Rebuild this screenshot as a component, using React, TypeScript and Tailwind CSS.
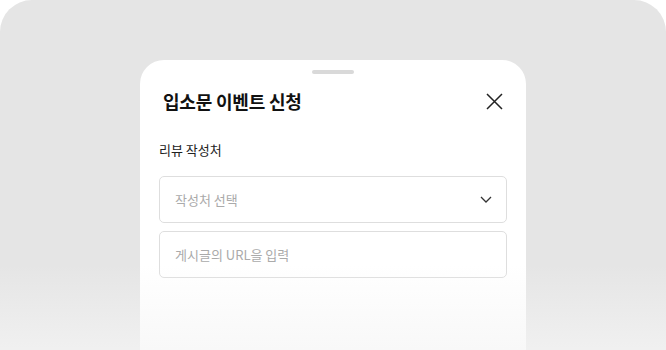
export default function App() {
  return (
    <div
      className="relative flex h-[350px] w-[666px] flex-col items-center overflow-hidden rounded-t-[32px] bg-[#e5e5e5] pt-[60px]"
      style={{ fontFamily: '"Noto Sans CJK KR", "Noto Sans", sans-serif' }}
    >
      <div className="flex w-[386px] flex-1 flex-col rounded-t-[24px] bg-white px-[19px]">
        <div className="flex justify-center pt-[10px]">
          <div className="h-1 w-[42px] rounded-full bg-[#d9d9d9]" />
        </div>
        <div className="mt-[14px] flex items-center justify-between pl-1">
          <h1 className="text-[18px] font-bold leading-[26px] tracking-[-0.2px] text-[#111]">입소문 이벤트 신청</h1>
          <button className="flex h-[26px] w-[26px] items-center justify-center">
            <svg width="17" height="17" viewBox="0 0 17 17" fill="none" stroke="#222" strokeWidth="1.5">
              <path d="M1 1l15 15M16 1L1 16" />
            </svg>
          </button>
        </div>
        <div className="mt-[26px] text-[13px] leading-[20px] text-[#222]">리뷰 작성처</div>
        <div className="mt-[16px] flex h-[47px] items-center justify-between rounded-[5px] border border-[#dedede] pl-[15px] pr-[14px]">
          <span className="text-[13px] text-[#aaa]">작성처 선택</span>
          <svg width="12" height="7" viewBox="0 0 12 7" fill="none" stroke="#333" strokeWidth="1.3">
            <path d="M1 1l5 5 5-5" />
          </svg>
        </div>
        <div className="mt-[8px] flex h-[47px] items-center rounded-[5px] border border-[#dedede] pl-[15px]">
          <span className="text-[13px] text-[#aaa]">게시글의 URL을 입력</span>
        </div>
      </div>
      <div className="pointer-events-none absolute inset-x-0 bottom-0 h-[85px] bg-gradient-to-b from-[#f5f5f500] to-[#f5f5f5b3]" />
    </div>
  );
}
